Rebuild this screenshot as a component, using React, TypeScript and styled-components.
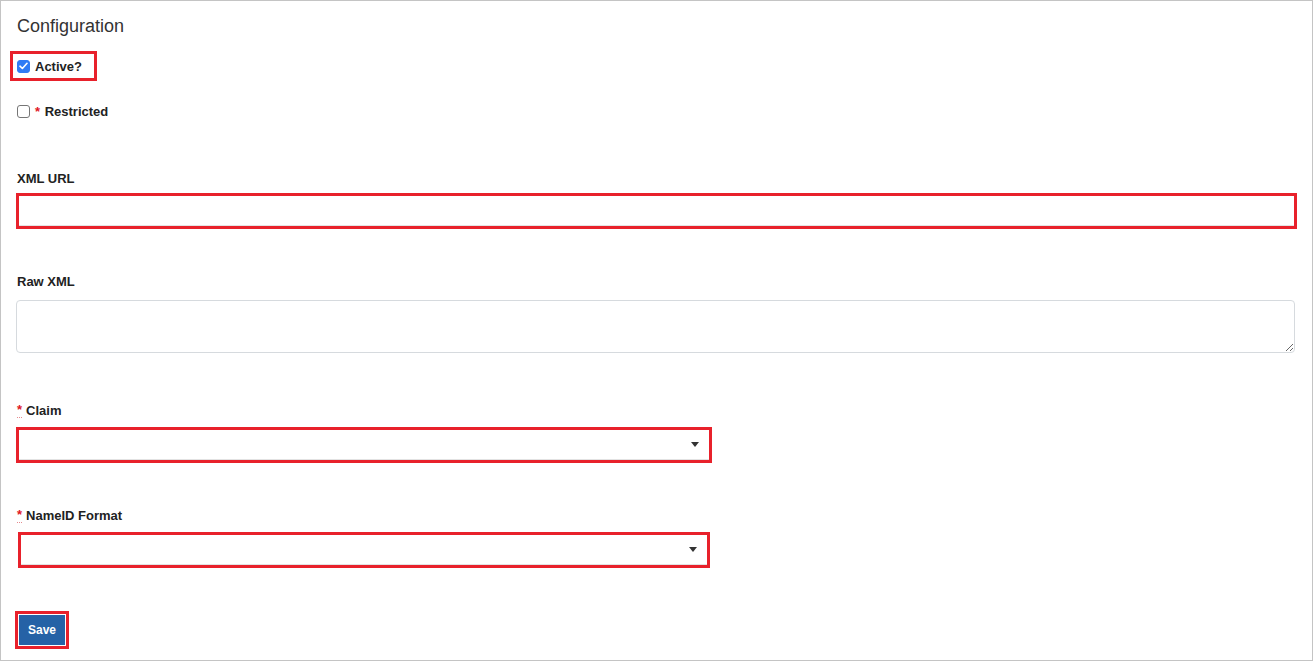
import React from "react";
import styled, { createGlobalStyle } from "styled-components";

const Global = createGlobalStyle`
  html, body { margin: 0; padding: 0; background: #ffffff; }
  body { font-family: "Liberation Sans", Arial, Helvetica, sans-serif; color: #333333; }
  * { box-sizing: border-box; }
`;

const RED = "#e8212b";

const Panel = styled.div`
  width: 1313px;
  height: 661px;
  border: 1px solid #c4c4c4;
  background: #ffffff;
  padding: 14px 0 0 15px;
  display: flex;
  flex-direction: column;
  align-items: flex-start;
`;

const Heading = styled.h2`
  margin: 0;
  font-size: 18px;
  line-height: 22px;
  font-weight: 400;
  color: #333333;
  padding-left: 1px;
`;

const Highlight = styled.div<{ $mt: number; $ml?: number; $w?: number }>`
  margin-top: ${(p) => p.$mt}px;
  margin-left: ${(p) => p.$ml ?? 0}px;
  border: 3px solid ${RED};
  width: ${(p) => (p.$w ? `${p.$w}px` : "auto")};
  display: flex;
  align-items: center;
`;

const CheckRow = styled.label<{ $mt?: number; $pl?: number }>`
  display: flex;
  align-items: center;
  gap: 5px;
  height: 24px;
  margin-top: ${(p) => p.$mt ?? 0}px;
  padding: 0 12px 0 ${(p) => p.$pl ?? 0}px;
  font-size: 13px;
  font-weight: 700;
  color: #222222;
`;

const Box = styled.span<{ $checked?: boolean }>`
  width: 13px;
  height: 13px;
  border-radius: 3px;
  flex: none;
  display: flex;
  align-items: center;
  justify-content: center;
  background: ${(p) => (p.$checked ? "#2f7bf5" : "#ffffff")};
  border: 1px solid ${(p) => (p.$checked ? "#2f7bf5" : "#767676")};
`;

const Star = styled.abbr`
  color: #e0161e;
  text-decoration: none;
  font-weight: 700;
  font-size: 13px;
  line-height: 12px;
  border-bottom: 1px dotted #e58a8e;
  padding-bottom: 1px;
  margin-right: 4px;
  align-self: center;
`;

const RestrictStar = styled.span`
  color: #e0161e;
  font-weight: 700;
  margin-right: 1px;
`;

const Label = styled.div<{ $mt: number }>`
  margin-top: ${(p) => p.$mt}px;
  padding-left: 1px;
  font-size: 13px;
  line-height: 18px;
  font-weight: 700;
  color: #222222;
  display: flex;
  align-items: center;
`;

const TextInput = styled.input`
  width: 100%;
  height: 30px;
  border: none;
  border-bottom: 1px solid #e4e4e4;
  outline: none;
  background: #ffffff;
  padding: 0 8px;
  font-size: 13px;
`;

const TextArea = styled.textarea`
  margin-top: 9px;
  width: 1279px;
  height: 53px;
  border: 1px solid #d6dade;
  border-radius: 4px;
  resize: both;
  outline: none;
  font-family: inherit;
  font-size: 13px;
  padding: 6px 8px;
`;

const SelectWrap = styled.div`
  position: relative;
  width: 100%;
  height: 30px;
`;

const Select = styled.select`
  appearance: none;
  -webkit-appearance: none;
  width: 100%;
  height: 30px;
  border: none;
  border-bottom: 1px solid #e2e2e2;
  background: #ffffff;
  outline: none;
  font-size: 13px;
  padding: 0 24px 0 8px;
  font-family: inherit;
`;

const Caret = styled.svg`
  position: absolute;
  right: 10px;
  top: 12px;
  pointer-events: none;
`;

const SaveButton = styled.button`
  width: 46px;
  height: 30px;
  border: none;
  background: #2562a6;
  color: #ffffff;
  font-family: inherit;
  font-size: 12px;
  font-weight: 700;
  margin: 0;
  padding: 0;
  display: flex;
  align-items: center;
  justify-content: center;
`;

const SaveFrame = styled.div`
  margin-top: 43px;
  margin-left: -1px;
  border: 3px solid ${RED};
  padding: 1px;
`;

const Check = () => (
  <svg width="9" height="8" viewBox="0 0 9 8">
    <path d="M1 4.2 L3.4 6.5 L8 1.3" fill="none" stroke="#fff" strokeWidth="1.6" strokeLinecap="round" strokeLinejoin="round" />
  </svg>
);

const Dropdown = () => (
  <SelectWrap>
    <Select defaultValue="">
      <option value=""></option>
    </Select>
    <Caret width="8" height="5" viewBox="0 0 8 5">
      <path d="M0 0 H8 L4 5 Z" fill="#333" />
    </Caret>
  </SelectWrap>
);

export default function App() {
  return (
    <>
      <Global />
      <Panel>
        <Heading>Configuration</Heading>
        <Highlight $mt={14} $ml={-6}>
          <CheckRow $pl={4}>
            <Box $checked>
              <Check />
            </Box>
            Active?
          </CheckRow>
        </Highlight>
        <CheckRow $mt={18} $pl={1}>
          <Box />
          <span>
            <RestrictStar>*</RestrictStar> Restricted
          </span>
        </CheckRow>
        <Label $mt={47}>XML URL</Label>
        <Highlight $mt={5} $w={1281}>
          <TextInput />
        </Highlight>
        <Label $mt={44}>Raw XML</Label>
        <TextArea />
        <Label $mt={49}>
          <Star title="required">*</Star>Claim
        </Label>
        <Highlight $mt={7} $w={696}>
          <Dropdown />
        </Highlight>
        <Label $mt={44}>
          <Star title="required">*</Star>NameID Format
        </Label>
        <Highlight $mt={7} $ml={2} $w={692}>
          <Dropdown />
        </Highlight>
        <SaveFrame>
          <SaveButton>Save</SaveButton>
        </SaveFrame>
      </Panel>
    </>
  );
}
